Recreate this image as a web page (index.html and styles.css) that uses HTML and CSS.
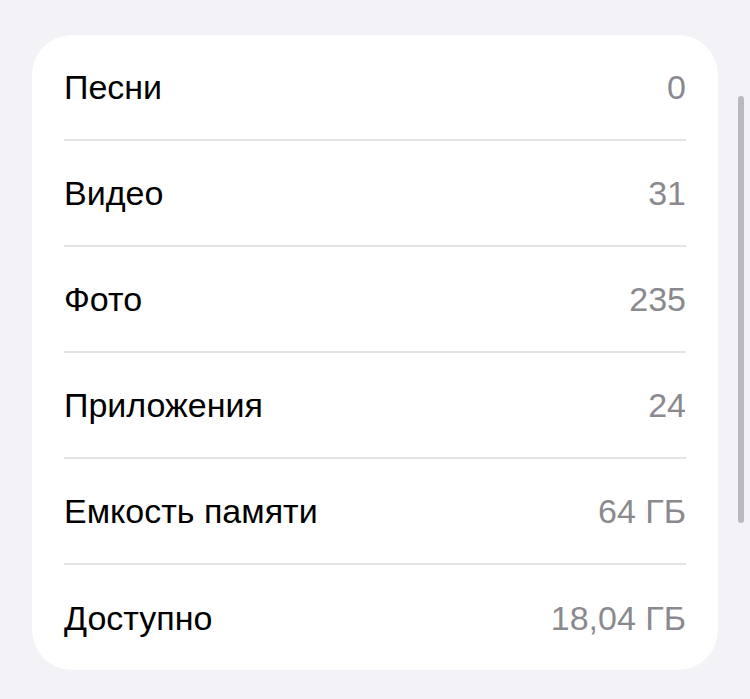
FILE: index.html
```html
<!DOCTYPE html>
<html lang="ru">
<head>
    <meta charset="UTF-8">
    <meta name="viewport" content="width=device-width, initial-scale=1.0">
    <title>Об этом устройстве</title>
    <link rel="stylesheet" href="styles.css">
</head>
<body>
    <div class="list-card">
        <div class="list-row">
            <span class="row-label">Песни</span>
            <span class="row-value">0</span>
        </div>
        <div class="list-row">
            <span class="row-label">Видео</span>
            <span class="row-value">31</span>
        </div>
        <div class="list-row">
            <span class="row-label">Фото</span>
            <span class="row-value">235</span>
        </div>
        <div class="list-row">
            <span class="row-label">Приложения</span>
            <span class="row-value">24</span>
        </div>
        <div class="list-row">
            <span class="row-label">Емкость памяти</span>
            <span class="row-value">64 ГБ</span>
        </div>
        <div class="list-row">
            <span class="row-label">Доступно</span>
            <span class="row-value">18,04 ГБ</span>
        </div>
    </div>

    <div class="scroll-indicator"></div>
</body>
</html>
```

FILE: styles.css
```css
body {
    font-family: "Liberation Sans", Arial, sans-serif;
    background-color: #f2f2f7;
    margin: 0;
    padding: 35px 32px 0 32px;
    height: 699px;
    box-sizing: border-box;
    overflow: hidden;
}
.list-card {
    background-color: #ffffff;
    border-radius: 40px;
    padding: 0 32px;
}
.list-row {
    display: flex;
    justify-content: space-between;
    align-items: center;
    height: 106px;
    box-sizing: border-box;
    border-bottom: 2px solid #e4e4e7;
    font-size: 34px;
    padding-top: 1px;
}
.list-row:last-child {
    border-bottom: none;
    height: 105px;
}
.row-label {
    color: #000000;
}
.row-value {
    color: #8a8a8e;
}
.scroll-indicator {
    position: absolute;
    top: 96px;
    right: 6px;
    width: 6px;
    height: 427px;
    border-radius: 3px;
    background-color: #b9b9be;
}
```
